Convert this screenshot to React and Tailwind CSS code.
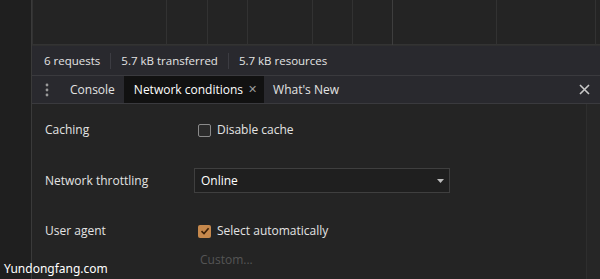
import React from "react";

const gridLines = [34, 168, 209, 249, 314, 354, 394, 498, 597];

function Checkbox({ checked }) {
  if (checked) {
    return (
      <span className="flex h-[13px] w-[13px] items-center justify-center rounded-[2px] bg-[#c6884c]">
        <svg width="10" height="10" viewBox="0 0 10 10">
          <path d="M1.5 5.2 L4 7.6 L8.6 2.2" fill="none" stroke="#3a1f08" strokeWidth="1.6" />
        </svg>
      </span>
    );
  }
  return <span className="h-[13px] w-[13px] rounded-[2px] border border-[#8a8a8a] bg-[#2a2a2a]" />;
}

export default function App() {
  return (
    <div
      className="flex h-[279px] w-[600px] overflow-hidden bg-[#202020] text-[12px] text-[#e3e3e3]"
      style={{ fontFamily: '"Open Sans", "Noto Sans", sans-serif' }}
    >
      <div className="w-[32px] shrink-0 border-r border-[#3a3a3a] bg-[#1f1f1f]" />

      <div className="relative flex min-w-0 flex-1 flex-col">
        {/* waterfall grid */}
        <div className="h-[45px] shrink-0 border-b border-[#333] bg-[#242424]">
          <svg width="567" height="45" className="block">
            {gridLines.map((x) => (
              <line
                key={x}
                x1={x - 33.5}
                x2={x - 33.5}
                y1="0"
                y2="45"
                stroke={x === 394 ? "#3e3e3e" : "#323232"}
                strokeWidth="1"
              />
            ))}
          </svg>
        </div>

        {/* status bar */}
        <div className="flex h-[30px] shrink-0 items-center border-t border-[#2f2f2f] bg-[#29292e] pl-[12px] text-[11.5px]">
          <span>6 requests</span>
          <span className="mx-[10px] h-[16px] w-px bg-[#3c3c42]" />
          <span>5.7 kB transferred</span>
          <span className="mx-[10px] h-[16px] w-px bg-[#3c3c42]" />
          <span>5.7 kB resources</span>
        </div>

        {/* drawer tabs */}
        <div className="flex h-[29px] shrink-0 items-stretch border-y border-[#3a3a3e] bg-[#29292e]">
          <div className="flex w-[29px] items-center justify-center">
            <svg width="4" height="14" viewBox="0 0 4 14">
              <circle cx="2" cy="2" r="1.4" fill="#9a9a9a" />
              <circle cx="2" cy="7" r="1.4" fill="#9a9a9a" />
              <circle cx="2" cy="12" r="1.4" fill="#9a9a9a" />
            </svg>
          </div>
          <div className="flex items-center px-[9px]">Console</div>
          <div className="flex items-center bg-[#111111] pl-[10px] pr-[7px] text-white">
            Network conditions
            <span className="ml-[5px] text-[11px] text-[#9a9a9a]">✕</span>
          </div>
          <div className="flex items-center px-[9px]">What's New</div>
          <div className="flex-1" />
          <div className="flex items-center pr-[10px]">
            <svg width="11" height="11" viewBox="0 0 11 11">
              <path d="M1 1 L10 10 M10 1 L1 10" stroke="#c8c8c8" strokeWidth="1.6" />
            </svg>
          </div>
        </div>

        {/* network conditions panel */}
        <div className="flex flex-1 bg-[#242424]">
          <div className="flex flex-1 flex-col pl-[13px] pt-[17px]">
            <div className="flex h-[18px] items-center">
              <span className="w-[153px]">Caching</span>
              <Checkbox />
              <span className="ml-[6px]">Disable cache</span>
            </div>

            <div className="mt-[29px] flex items-center">
              <span className="w-[149px]">Network throttling</span>
              <div className="flex h-[25px] w-[256px] items-center justify-between border border-[#3f3f3f] bg-[#1f1f1f] pl-[6px] pr-[5px] text-white">
                Online
                <svg width="7" height="4" viewBox="0 0 7 4">
                  <path d="M0 0 L7 0 L3.5 4 Z" fill="#bdbdbd" />
                </svg>
              </div>
            </div>

            <div className="mt-[29px] flex h-[18px] items-center">
              <span className="w-[153px]">User agent</span>
              <Checkbox checked />
              <span className="ml-[6px]">Select automatically</span>
            </div>

            <div className="mt-[9px] flex">
              <span className="w-[149px]" />
              <div className="flex h-[22px] w-[256px] items-center pl-[6px] text-[#555]">Custom...</div>
            </div>
          </div>
          <div className="w-[14px] shrink-0 border-l border-[#2e2e2e] bg-[#262626]" />
        </div>

        <div className="pointer-events-none absolute bottom-[1px] left-[-28px] text-[12px] text-white" style={{ fontFamily: '"Noto Sans", sans-serif' }}>
          Yundongfang.com
        </div>
      </div>
    </div>
  );
}
